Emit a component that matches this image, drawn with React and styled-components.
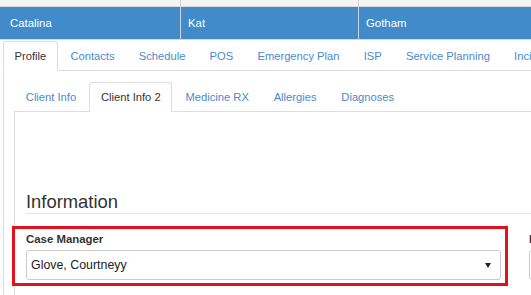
import React from "react";
import styled, { createGlobalStyle } from "styled-components";

const Global = createGlobalStyle`
  html, body { margin: 0; padding: 0; background: #fff; }
  body {
    font-family: "Liberation Sans", Arial, sans-serif;
    width: 531px;
    height: 295px;
    overflow: hidden;
    color: #333;
  }
  * { box-sizing: border-box; }
`;

const Table = styled.div`
  display: grid;
  grid-template-columns: 180px 178px 200px;
  width: 600px;
`;

const HeadCell = styled.div`
  height: 7px;
  background: #f4f4f4;
  border-bottom: 1px solid #dcdcdc;
  border-left: ${(p) => (p.$first ? "none" : "1px solid #d4d4d4")};
`;

const Cell = styled.div`
  height: 33px;
  background: #418bca;
  color: #fff;
  font-size: 11.4px;
  display: flex;
  align-items: center;
  padding-left: ${(p) => (p.$first ? "10px" : "7px")};
  border-left: ${(p) => (p.$first ? "none" : "1px solid #c9d3dc")};
  border-bottom: 1px solid #d6d6d6;
`;

const Page = styled.div`
  padding: 1px 0 0 3px;
`;

const Nav = styled.div`
  display: flex;
  border-bottom: 1px solid #ddd;
  white-space: nowrap;
  width: ${(p) => p.$width || "auto"};
`;

const Tab = styled.div`
  flex: none;
  height: 30px;
  margin-bottom: -1px;
  margin-right: 1.2px;
  padding: 0 ${(p) => p.$pad || "10.8px"};
  display: flex;
  align-items: center;
  font-size: 11.2px;
  border: 1px solid transparent;
  border-radius: 3px 3px 0 0;
  color: ${(p) => (p.$active ? "#333" : "#4a8ad0")};
  background: ${(p) => (p.$active ? "#fff" : "transparent")};
  border-color: ${(p) => (p.$active ? "#ddd #ddd transparent #ddd" : "transparent")};
`;

const OuterPane = styled.div`
  border-left: 1px solid #ddd;
  padding: 11px 0 0 10px;
  height: 240px;
`;

const InnerPane = styled.div`
  border-left: 1px solid #ddd;
  padding: 80px 0 0 11px;
  height: 200px;
`;

const Heading = styled.h3`
  margin: 0;
  font-size: 18.4px;
  font-weight: 400;
  line-height: 1.1;
  color: #333;
  padding-bottom: 1px;
  border-bottom: 1px solid #e5e5e5;
  width: 600px;
`;

const FieldRow = styled.div`
  display: grid;
  grid-template-columns: 475px 475px;
  column-gap: 28px;
  margin-top: 17px;
`;

const Field = styled.div`
  position: relative;
`;

const Label = styled.div`
  font-size: 11.4px;
  font-weight: 700;
  line-height: 16px;
  color: #333;
  margin-bottom: 3px;
  white-space: nowrap;
`;

const Select = styled.div`
  height: 30px;
  border: 1px solid #ccc;
  border-radius: 3px;
  display: flex;
  align-items: center;
  justify-content: space-between;
  padding: 0 9px 0 4px;
  font-size: 12.4px;
  color: #222;
`;

const Arrow = styled.span`
  width: 0;
  height: 0;
  border-left: 3.5px solid transparent;
  border-right: 3.5px solid transparent;
  border-top: 5px solid #222;
  margin-top: 1px;
`;

const Highlight = styled.div`
  position: absolute;
  left: -13.8px;
  top: -5.3px;
  width: 496px;
  height: 60px;
  border: 3.4px solid #e5101f;
  pointer-events: none;
`;

const outerTabs = ["Profile", "Contacts", "Schedule", "POS", "Emergency Plan", "ISP", "Service Planning", "Incidents"];
const innerTabs = ["Client Info", "Client Info 2", "Medicine RX", "Allergies", "Diagnoses"];

export default function App() {
  return (
    <>
      <Global />
      <Table>
        <HeadCell $first />
        <HeadCell />
        <HeadCell />
        <Cell $first>Catalina</Cell>
        <Cell>Kat</Cell>
        <Cell>Gotham</Cell>
      </Table>
      <Page>
        <Nav $width="700px">
          {outerTabs.map((t, i) => (
            <Tab key={t} $active={i === 0} $pad="10.5px">{t}</Tab>
          ))}
        </Nav>
        <OuterPane>
          <Nav $width="600px">
            {innerTabs.map((t, i) => (
              <Tab key={t} $active={i === 1}>{t}</Tab>
            ))}
          </Nav>
          <InnerPane>
            <Heading>Information</Heading>
            <FieldRow>
              <Field>
                <Label>Case Manager</Label>
                <Select>
                  <span>Glove, Courtneyy</span>
                  <Arrow />
                </Select>
                <Highlight />
              </Field>
              <Field>
                <Label>Program</Label>
                <Select>
                  <span></span>
                  <Arrow />
                </Select>
              </Field>
            </FieldRow>
          </InnerPane>
        </OuterPane>
      </Page>
    </>
  );
}
